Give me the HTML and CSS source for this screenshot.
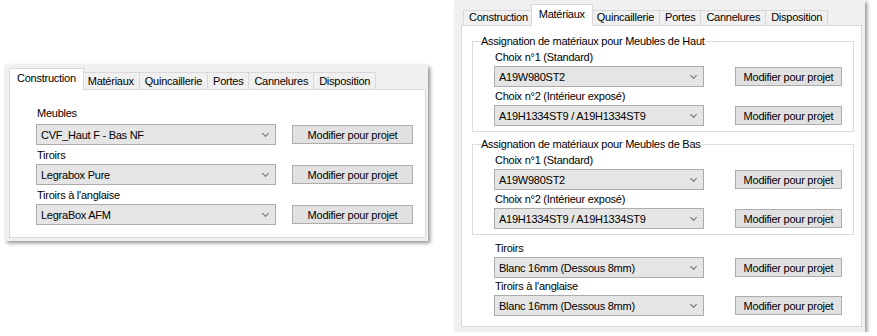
FILE: index.html
```html
<!DOCTYPE html>
<html lang="fr">

<head>
    <meta charset="UTF-8">
    <meta name="viewport" content="width=device-width, initial-scale=1.0">
    <title>Options de projet</title>
    <link rel="stylesheet" href="styles.css">
</head>

<body>
    <!-- Onglet Construction -->
    <div class="window win-small">
        <div class="tabs">
            <span class="tab active">Construction</span>
            <span class="tab">Matériaux</span>
            <span class="tab">Quincaillerie</span>
            <span class="tab">Portes</span>
            <span class="tab">Cannelures</span>
            <span class="tab">Disposition</span>
        </div>
        <div class="page page-construction">
            <div class="field field-first">
                <label>Meubles</label>
                <div class="row">
                    <div class="combo"><span>CVF_Haut F - Bas NF</span></div>
                    <button class="btn">Modifier pour projet</button>
                </div>
            </div>
            <div class="field">
                <label>Tiroirs</label>
                <div class="row">
                    <div class="combo"><span>Legrabox Pure</span></div>
                    <button class="btn">Modifier pour projet</button>
                </div>
            </div>
            <div class="field">
                <label>Tiroirs à l'anglaise</label>
                <div class="row">
                    <div class="combo"><span>LegraBox AFM</span></div>
                    <button class="btn">Modifier pour projet</button>
                </div>
            </div>
        </div>
    </div>

    <!-- Onglet Matériaux -->
    <div class="window win-large">
        <div class="tabs">
            <span class="tab">Construction</span>
            <span class="tab active">Matériaux</span>
            <span class="tab">Quincaillerie</span>
            <span class="tab">Portes</span>
            <span class="tab">Cannelures</span>
            <span class="tab">Disposition</span>
        </div>
        <div class="page page-materiaux">
            <fieldset class="group">
                <legend>Assignation de matériaux pour Meubles de Haut</legend>
                <div class="field">
                    <label>Choix n°1 (Standard)</label>
                    <div class="row">
                        <div class="combo"><span>A19W980ST2</span></div>
                        <button class="btn">Modifier pour projet</button>
                    </div>
                </div>
                <div class="field">
                    <label>Choix n°2 (Intérieur exposé)</label>
                    <div class="row">
                        <div class="combo"><span>A19H1334ST9 / A19H1334ST9</span></div>
                        <button class="btn">Modifier pour projet</button>
                    </div>
                </div>
            </fieldset>
            <fieldset class="group">
                <legend>Assignation de matériaux pour Meubles de Bas</legend>
                <div class="field">
                    <label>Choix n°1 (Standard)</label>
                    <div class="row">
                        <div class="combo"><span>A19W980ST2</span></div>
                        <button class="btn">Modifier pour projet</button>
                    </div>
                </div>
                <div class="field">
                    <label>Choix n°2 (Intérieur exposé)</label>
                    <div class="row">
                        <div class="combo"><span>A19H1334ST9 / A19H1334ST9</span></div>
                        <button class="btn">Modifier pour projet</button>
                    </div>
                </div>
            </fieldset>
            <div class="loose">
                <div class="field">
                    <label>Tiroirs</label>
                    <div class="row">
                        <div class="combo"><span>Blanc 16mm (Dessous 8mm)</span></div>
                        <button class="btn">Modifier pour projet</button>
                    </div>
                </div>
                <div class="field">
                    <label>Tiroirs à l'anglaise</label>
                    <div class="row">
                        <div class="combo"><span>Blanc 16mm (Dessous 8mm)</span></div>
                        <button class="btn">Modifier pour projet</button>
                    </div>
                </div>
            </div>
        </div>
    </div>
</body>

</html>
```

FILE: styles.css
```css
/* General Styles */

body {
    font-family: 'Liberation Sans', Arial, sans-serif;
    font-size: 11px;
    letter-spacing: -0.25px;
    line-height: 14px;
    color: #000;
    background: #fff;
    margin: 0;
    padding: 0;
    display: flex;
    align-items: flex-start;
}

/* Windows */

.window {
    box-sizing: border-box;
    display: flex;
    flex-direction: column;
    background: #f0f0f0;
    box-shadow: 2px 2px 4px rgba(0, 0, 0, 0.45);
}

.win-small {
    width: 423px;
    height: 176px;
    margin: 65px 0 0 5px;
    padding: 3px 2px 3px 4px;
}

.win-large {
    width: 410px;
    height: 332px;
    margin: 0 0 0 27px;
    padding: 4px 3px 5px 6px;
}

/* Tabs */

.tabs {
    display: flex;
    align-items: flex-end;
    height: 21px;
    padding-left: 2px;
    position: relative;
    z-index: 1;
}

.tab {
    box-sizing: border-box;
    height: 17px;
    padding: 1px 5px 0;
    margin-right: -1px;
    background: #f0f0f0;
    border: 1px solid #d9d9d9;
    border-bottom: none;
    white-space: nowrap;
}

.win-large .tab {
    height: 15px;
    padding-top: 0;
    line-height: 12px;
}

.tab.active,
.win-large .tab.active {
    height: 22px;
    margin: 0 -1px -1px -2px;
    padding: 2px 7px 0;
    line-height: 14px;
    background: #fff;
    position: relative;
    z-index: 2;
}

.tab.active + .tab {
    margin-left: -1px;
}

/* Pages */

.page {
    flex: 1;
    background: #fff;
    border: 1px solid #d9d9d9;
}

.page-construction {
    padding: 16px 0 0 26px;
}

.page-materiaux {
    padding: 0 7px 0 10px;
}

.field {
    margin-bottom: 3px;
}

.field label {
    display: block;
    padding-left: 1px;
    margin-bottom: 2px;
}

.field-first label {
    margin-bottom: 4px;
}

.row {
    display: flex;
    align-items: center;
}

/* Combo box */

.combo {
    box-sizing: border-box;
    display: flex;
    align-items: center;
    justify-content: space-between;
    height: 21px;
    padding: 0 7px 0 4px;
    background: #e5e5e5;
    border: 1px solid #acacac;
}

.combo::after {
    content: "";
    width: 4px;
    height: 4px;
    margin-top: -3px;
    border-right: 1px solid #6d6d6d;
    border-bottom: 1px solid #6d6d6d;
    transform: rotate(45deg);
}

.btn {
    box-sizing: border-box;
    height: 19px;
    padding: 0;
    font: inherit;
    letter-spacing: inherit;
    color: #000;
    background: #e1e1e1;
    border: 1px solid #adadad;
}

.page-construction .combo {
    width: 240px;
}

.page-construction .btn {
    width: 121px;
    margin-left: 16px;
}

.page-materiaux .combo {
    width: 210px;
}

.page-materiaux .btn {
    width: 107px;
    margin-left: 31px;
}

/* Group boxes */

.group {
    margin: 8px 0 0;
    padding: 2px 0 5px 8px;
    border: 1px solid #dcdcdc;
}

.group + .group {
    margin-top: 5px;
}

.group legend {
    padding: 0;
}

.group .field {
    margin: 0 0 2px 13px;
}

.group .field:last-child {
    margin-bottom: 0;
}

.loose {
    margin: 6px 0 0 22px;
}

.loose .field {
    margin-bottom: 1px;
}
```
